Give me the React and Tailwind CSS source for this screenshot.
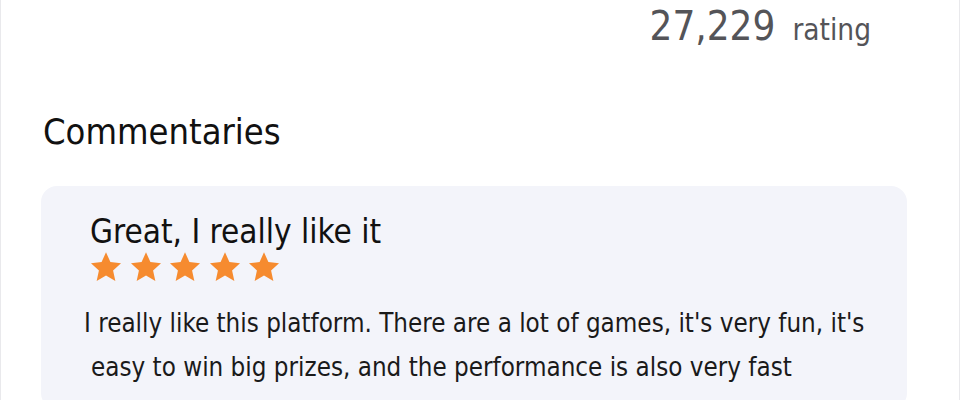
import React from 'react';

const Star = () => (
  <svg viewBox="0 0 24 24" className="w-[34px] h-[34px]" fill="#f68b2f">
    <path d="M12 1.6l3.1 6.9 7.5.8-5.6 5.1 1.6 7.4L12 18l-6.6 3.8 1.6-7.4-5.6-5.1 7.5-.8z" />
  </svg>
);

const App = () => {
  return (
    <div
      className="w-[960px] h-[400px] overflow-hidden bg-white border-l border-r border-[#e9e9ec]"
      style={{ fontFamily: '"DejaVu Sans Condensed", "DejaVu Sans", Tahoma, sans-serif', fontStretch: 'condensed' }}
    >
      {/* rating count */}
      <div className="flex justify-end items-baseline gap-[17px] pr-[88px] pt-[2px] text-[#545458] leading-[48px]">
        <span className="text-[40px] font-light">27,229</span>
        <span className="text-[29.5px]">rating</span>
      </div>

      <h2 className="pl-[42px] mt-[56px] text-[36px] leading-[44px] text-[#111]">Commentaries</h2>

      {/* comment card */}
      <div className="ml-[40px] mr-[52px] mt-[32px] rounded-[16px] bg-[#f3f4fa] pl-[49px] pt-[26px] pb-[20px]">
        <h3 className="text-[33px] leading-[40px] text-[#111]">Great, I really like it</h3>
        <div className="flex gap-[5.5px] -mt-[2px] -ml-[1px]">
          <Star />
          <Star />
          <Star />
          <Star />
          <Star />
        </div>
        <p className="mt-[17px] -ml-[6px] text-[25.75px] leading-[44px] text-[#1a1a1a]">
          <span className="block">I really like this platform. There are a lot of games, it's very fun, it's</span>
          <span className="block pl-[7px]">easy to win big prizes, and the performance is also very fast</span>
        </p>
      </div>
    </div>
  );
};

export default App;
